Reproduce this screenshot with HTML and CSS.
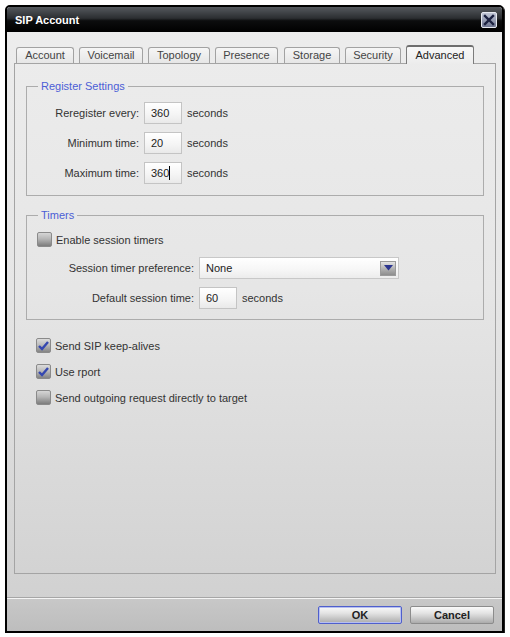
FILE: index.html
```html
<!DOCTYPE html>
<html>
	<head>
		<meta charset="utf-8">
		<title>SIP Account</title>
		<link rel="stylesheet" href="styles.css">
	</head>
	<body>
		<div id="window">
			<div id="titlebar">
				<span id="title">SIP Account</span>
				<span id="btnClose">
					<svg width="16" height="16" viewBox="0 0 16 16">
						<defs>
							<linearGradient id="closeBg" x1="0" y1="0" x2="0" y2="1">
								<stop offset="0" stop-color="#c4cad8"/>
								<stop offset="1" stop-color="#6c7490"/>
							</linearGradient>
						</defs>
						<rect x="0.5" y="0.5" width="15" height="15" rx="1.5" fill="url(#closeBg)" stroke="#e6e9f0"/>
						<path d="M4 4 L12 12 M12 4 L4 12" stroke="#1b2140" stroke-width="2.4" stroke-linecap="square"/>
					</svg>
				</span>
			</div>
			<div id="content">
				<div id="tabs">
					<div class="tab tabAccount">Account</div>
					<div class="tab tabVoicemail">Voicemail</div>
					<div class="tab tabTopology">Topology</div>
					<div class="tab tabPresence">Presence</div>
					<div class="tab tabStorage">Storage</div>
					<div class="tab tabSecurity">Security</div>
					<div class="tab tabAdvanced selected">Advanced</div>
				</div>
				<div id="pane">
					<fieldset class="group" id="registerGroup">
						<legend>Register Settings</legend>
						<div class="row">
							<label class="lbl">Reregister every:</label>
							<span class="field">360</span>
							<span class="unit">seconds</span>
						</div>
						<div class="row">
							<label class="lbl">Minimum time:</label>
							<span class="field">20</span>
							<span class="unit">seconds</span>
						</div>
						<div class="row">
							<label class="lbl">Maximum time:</label>
							<span class="field">360<span class="caret"></span></span>
							<span class="unit">seconds</span>
						</div>
					</fieldset>
					<fieldset class="group" id="timersGroup">
						<legend>Timers</legend>
						<div class="checkRow"><span class="check"></span>Enable session timers</div>
						<div class="row">
							<label class="lbl wide">Session timer preference:</label>
							<span class="select">None
								<span class="dropBtn">
									<svg width="9" height="6" viewBox="0 0 9 6"><path d="M0 0 H9 L4.5 5.5 Z" fill="#2b358f"/></svg>
								</span>
							</span>
						</div>
						<div class="row">
							<label class="lbl wide">Default session time:</label>
							<span class="field">60</span>
							<span class="unit">seconds</span>
						</div>
					</fieldset>
					<div id="options">
						<div class="checkRow"><span class="check checked"><svg width="13" height="13" viewBox="0 0 13 13"><path d="M2 7 L5 10 L11 3" fill="none" stroke="#3548b0" stroke-width="2.4"/></svg></span>Send SIP keep-alives</div>
						<div class="checkRow"><span class="check checked"><svg width="13" height="13" viewBox="0 0 13 13"><path d="M2 7 L5 10 L11 3" fill="none" stroke="#3548b0" stroke-width="2.4"/></svg></span>Use rport</div>
						<div class="checkRow"><span class="check"></span>Send outgoing request directly to target</div>
					</div>
				</div>
			</div>
			<div id="buttonBar">
				<div class="btn default">OK</div>
				<div class="btn">Cancel</div>
			</div>
		</div>
	</body>
</html>
```

FILE: styles.css
```css
body{
	margin:0;
	background:#fff;
	font-family:"Liberation Sans", Arial, sans-serif;
	font-size:11px;
	color:#333;
}

#window{
	margin:5px 0 0 5px;
	width:499px;
	height:628px;
	box-sizing:border-box;
	border:2px solid #000;
	border-radius:5px 5px 0 0;
	box-shadow:1px 1px 0 #222;
	display:flex;
	flex-direction:column;
	background:linear-gradient(#ededed, #e6e6e6 45%, #cfcfcf);
}

#titlebar{
	height:25px;
	flex:none;
	display:flex;
	align-items:center;
	justify-content:space-between;
	padding:0 5px 0 8px;
	border-radius:3px 3px 0 0;
	background:linear-gradient(#55595e, #2b2e31 45%, #0c0d0e 55%, #000);
}

#title{
	color:#fff;
	font-weight:bold;
	font-size:11px;
}

#btnClose{
	width:16px;
	height:16px;
	margin-top:1px;
}

#content{
	flex:1;
	padding:13px 6px 0 7px;
}

#tabs{
	display:flex;
	align-items:flex-end;
	gap:5px;
	height:18px;
	padding-left:2px;
}

.tab{
	height:16px;
	box-sizing:border-box;
	text-align:center;
	line-height:15px;
	border:1px solid #a2a2a2;
	border-bottom:none;
	border-radius:3px 3px 0 0;
	background:linear-gradient(#f6f6f6, #e6e6e6);
	color:#444;
}

.tabAccount{ width:58px; }
.tabVoicemail{ width:64px; }
.tabTopology{ width:62px; }
.tabPresence{ width:63px; margin-right:1px; }
.tabStorage{ width:56px; }
.tabSecurity{ width:56px; }
.tabAdvanced{ width:68px; }

.tab.selected{
	height:19px;
	margin-bottom:-1px;
	padding-top:1px;
	border-color:#7c7c7c;
	border-top:2px solid #6e6e6e;
	background:linear-gradient(#f8f8f8, #ececec);
	color:#222;
}

#pane{
	height:511px;
	box-sizing:border-box;
	border:1px solid #a4a4a4;
	padding:0 11px;
}

.group{
	margin:16px 0 0 0;
	padding:9px 0 11px 0;
	border:1px solid #acacac;
	min-width:0;
	display:flex;
	flex-direction:column;
	gap:8px;
}

.group legend{
	margin-left:11px;
	padding:0 3px;
	line-height:13px;
	color:#4b5ed6;
}

#timersGroup{
	margin-top:13px;
	padding:10px 0 10px 0;
}

#timersGroup .checkRow{
	margin-bottom:2px;
}

.row{
	display:flex;
	align-items:center;
	height:22px;
}

.lbl{
	width:112px;
	text-align:right;
	margin-right:5px;
}

.lbl.wide{
	width:167px;
}

.field{
	width:38px;
	height:22px;
	box-sizing:border-box;
	border:1px solid #c4c4c4;
	background:linear-gradient(#fff, #f4f4f4 60%, #e9e9e9);
	padding-left:6px;
	line-height:20px;
	color:#222;
}

.caret{
	display:inline-block;
	width:1px;
	height:14px;
	background:#000;
	vertical-align:-3px;
}

.unit{
	margin-left:5px;
}

.select{
	width:200px;
	height:22px;
	box-sizing:border-box;
	border:1px solid #c8c8c8;
	background:linear-gradient(#fff, #f6f6f6 60%, #ececec);
	padding:0 2px 0 6px;
	display:flex;
	align-items:center;
	justify-content:space-between;
	color:#222;
}

.dropBtn{
	width:16px;
	height:15px;
	box-sizing:border-box;
	border:1px solid #9a9a9a;
	background:linear-gradient(#e4e4e4, #b4b4b4 50%, #8e8e8e);
	display:flex;
	align-items:center;
	justify-content:center;
}

.checkRow{
	display:flex;
	align-items:center;
	height:15px;
	padding-left:10px;
}

.check{
	width:15px;
	height:15px;
	box-sizing:border-box;
	margin-right:4px;
	border:1px solid #8a8a8a;
	border-radius:2px;
	background:linear-gradient(#d6d6d6, #b6b6b6 45%, #7c7c7c);
	display:flex;
	align-items:center;
	justify-content:center;
}

.check.checked{
	background:linear-gradient(#dcdcdc, #bcbcbc 45%, #848484);
}

#options{
	margin-top:18px;
	display:flex;
	flex-direction:column;
	gap:11px;
}

#buttonBar{
	height:34px;
	flex:none;
	box-sizing:border-box;
	border-top:1px solid #a6a6a6;
	box-shadow:inset 0 1px 0 #f4f4f4;
	padding:8px 8px 0 0;
	display:flex;
	justify-content:flex-end;
	gap:8px;
	background:linear-gradient(#c8c8c8, #bdbdbd);
}

.btn{
	width:84px;
	height:18px;
	box-sizing:border-box;
	border:1px solid #8c8c8c;
	border-radius:2px;
	background:linear-gradient(#fafafa, #e2e2e2 40%, #ababab);
	text-align:center;
	line-height:16px;
	font-weight:bold;
	color:#222;
}

.btn.default{
	border-color:#4f5fcc;
	box-shadow:inset 0 0 0 1px #b6bff0;
}
```
